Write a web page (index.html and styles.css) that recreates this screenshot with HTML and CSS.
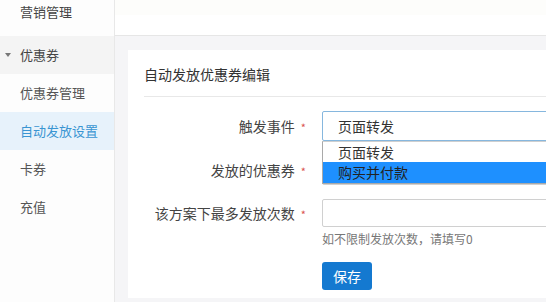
FILE: index.html
```html
<!DOCTYPE html>
<html lang="zh-CN">
<head>
    <meta charset="UTF-8">
    <meta name="viewport" content="width=device-width, initial-scale=1.0">
    <title>自动发放设置</title>
    <link rel="stylesheet" href="styles.css">
</head>
<body>

<div class="layout">
    <div class="sidebar">
        <div class="menu-item first">营销管理</div>
        <div class="menu-group"><span class="caret"></span>优惠券</div>
        <div class="menu-item">优惠券管理</div>
        <div class="menu-item active">自动发放设置</div>
        <div class="menu-item">卡券</div>
        <div class="menu-item">充值</div>
    </div>

    <div class="main">
        <div class="topbar"><div class="topbar-strip"></div></div>
        <div class="content">
            <div class="card">
                <div class="card-title">自动发放优惠券编辑</div>

                <form class="form">
                    <div class="form-row">
                        <label class="form-label">触发事件<span class="req">*</span></label>
                        <div class="form-control select-wrap">
                            <div class="select focused">页面转发</div>
                            <!-- opened dropdown list -->
                            <ul class="dropdown">
                                <li>页面转发</li>
                                <li class="selected">购买并付款</li>
                            </ul>
                        </div>
                    </div>

                    <div class="form-row">
                        <label class="form-label">发放的优惠券<span class="req">*</span></label>
                        <div class="form-control">
                            <div class="select"></div>
                        </div>
                    </div>

                    <div class="form-row short">
                        <label class="form-label">该方案下最多发放次数<span class="req">*</span></label>
                        <div class="form-control">
                            <input type="text" class="input">
                        </div>
                    </div>
                    <div class="help">如不限制发放次数，请填写0</div>

                    <div class="actions">
                        <button type="button" class="btn-save">保存</button>
                    </div>
                </form>
            </div>
        </div>
    </div>
</div>

</body>
</html>
```

FILE: styles.css
```css
body {
    margin: 0;
    font-family: "Noto Sans CJK SC", "Liberation Sans", sans-serif;
    color: #333;
    background-color: #f5f5f7;
    overflow: hidden;
}

.layout {
    display: flex;
    height: 302px;
}

.sidebar {
    width: 114px;
    flex-shrink: 0;
    background-color: #fdfdfd;
    border-right: 1px solid #e8e8e8;
    font-size: 13px;
}

.menu-item {
    height: 38px;
    line-height: 38px;
    padding-left: 20px;
    color: #555;
}

.menu-item.first {
    height: 36px;
    line-height: 24px;
    color: #444;
}

.menu-item.active {
    background-color: #e7f2fb;
    color: #3a95d2;
}

.menu-group {
    height: 38px;
    line-height: 38px;
    padding-left: 20px;
    position: relative;
    background-color: #f4f4f4;
    color: #444;
}

.caret {
    position: absolute;
    left: 5px;
    top: 17px;
    width: 0;
    height: 0;
    border-left: 3px solid transparent;
    border-right: 3px solid transparent;
    border-top: 4px solid #777;
}

.main {
    flex: 1;
    display: flex;
    flex-direction: column;
    min-width: 0;
    overflow: hidden;
}

.topbar {
    height: 35px;
    background-color: #fff;
    border-bottom: 1px solid #e6e6e6;
}

.topbar-strip {
    height: 15px;
    background-color: #fdfdfb;
}

.content {
    flex: 1;
    padding: 14px 0 0 13px;
}

.card {
    background-color: #fff;
    height: 248px;
    padding: 0 0 0 16px;
    overflow: hidden;
}

.card-title {
    font-size: 14px;
    line-height: 20px;
    padding: 14px 0 12px;
    border-bottom: 1px solid #e8e8e8;
}

.form {
    padding-top: 14px;
    font-size: 14px;
}

.form-row {
    display: flex;
    align-items: center;
    height: 30px;
    margin-bottom: 14px;
}

.form-row.short {
    height: 28px;
    margin-bottom: 0;
}

.form-label {
    width: 162px;
    flex-shrink: 0;
    text-align: right;
    color: #444;
    padding-right: 16px;
}

.req {
    color: #d9534f;
    font-size: 11px;
    margin-left: 6px;
}

.form-control {
    flex: 1;
    height: 100%;
    position: relative;
}

.select,
.input {
    box-sizing: border-box;
    width: 260px;
    height: 100%;
    border: 1px solid #d0d0d0;
    border-radius: 2px;
    background-color: #fff;
    padding-left: 15px;
    line-height: 28px;
    font-size: 14px;
    font-family: inherit;
    color: #333;
}

.select.focused {
    border-color: #86b7de;
}

.dropdown {
    position: absolute;
    top: 30px;
    left: 0;
    width: 260px;
    margin: 0;
    padding: 0;
    list-style: none;
    background-color: #fff;
    border: 1px solid #a9a9a9;
    border-top-color: #cfcfcf;
    z-index: 2;
}

.dropdown li {
    height: 20px;
    line-height: 20px;
    padding-left: 15px;
    font-size: 14px;
    color: #333;
}

.dropdown li.selected {
    height: 21px;
    line-height: 21px;
    background-color: #1e90ff;
    color: #222;
}

.help {
    margin-left: 178px;
    font-size: 12px;
    line-height: 18px;
    margin-top: 3px;
    color: #777;
}

.actions {
    margin-left: 178px;
    margin-top: 14px;
}

.btn-save {
    width: 50px;
    height: 28px;
    background-color: #1479d0;
    color: #fff;
    border: none;
    border-radius: 3px;
    font-size: 14px;
    font-family: inherit;
    cursor: pointer;
}
```
